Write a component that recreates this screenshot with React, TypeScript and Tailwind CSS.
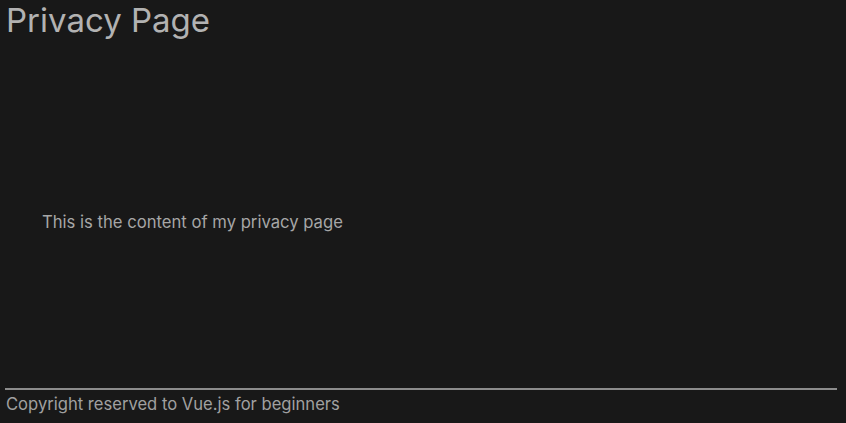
export default function App() {
  return (
    <div className="flex h-screen flex-col bg-[#181818] font-['Inter',sans-serif] text-[#a6a6a6]">
      <h1 className="pl-[6px] text-[33px] leading-[40px] font-normal text-[#b2b2b2]">Privacy Page</h1>
      <main className="flex-1 pt-[170px] pl-[42px] text-[16.65px] leading-6">
        <p>This is the content of my privacy page</p>
      </main>
      <footer className="mb-[7px] ml-[5px] mr-[9px] border-t-2 border-[#8c8c8c] pt-[2px] pl-px text-[16.6px] leading-6 text-[#a0a0a0]">
        Copyright reserved to Vue.js for beginners
      </footer>
    </div>
  );
}
